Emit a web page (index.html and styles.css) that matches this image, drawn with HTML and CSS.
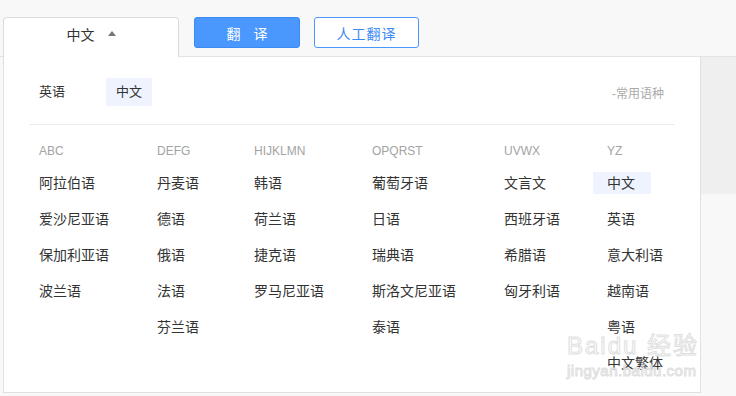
FILE: index.html
```html
<!DOCTYPE html>
<html lang="zh-CN">
<head>
  <meta charset="UTF-8" />
  <meta name="viewport" content="width=device-width, initial-scale=1.0" />
  <title>翻译 - 语种选择</title>
  <link rel="stylesheet" href="styles.css">
</head>
<body>
  <!-- Top bar: language tab and the two action buttons -->
  <div class="top-bar">
    <div class="lang-tab">
      <span>中文</span>
      <i class="caret"></i>
    </div>
    <button class="btn btn-primary">翻译</button>
    <button class="btn btn-outline">人工翻译</button>
  </div>

  <div class="main">
    <div class="lang-panel">
      <div class="common-row">
        <span class="lang-item">英语</span>
        <span class="lang-item active">中文</span>
        <span class="common-label">-常用语种</span>
      </div>

      <div class="lang-columns">
        <div class="lang-col">
          <div class="col-title">ABC</div>
          <div class="lang-item">阿拉伯语</div>
          <div class="lang-item">爱沙尼亚语</div>
          <div class="lang-item">保加利亚语</div>
          <div class="lang-item">波兰语</div>
        </div>
        <div class="lang-col">
          <div class="col-title">DEFG</div>
          <div class="lang-item">丹麦语</div>
          <div class="lang-item">德语</div>
          <div class="lang-item">俄语</div>
          <div class="lang-item">法语</div>
          <div class="lang-item">芬兰语</div>
        </div>
        <div class="lang-col">
          <div class="col-title">HIJKLMN</div>
          <div class="lang-item">韩语</div>
          <div class="lang-item">荷兰语</div>
          <div class="lang-item">捷克语</div>
          <div class="lang-item">罗马尼亚语</div>
        </div>
        <div class="lang-col">
          <div class="col-title">OPQRST</div>
          <div class="lang-item">葡萄牙语</div>
          <div class="lang-item">日语</div>
          <div class="lang-item">瑞典语</div>
          <div class="lang-item">斯洛文尼亚语</div>
          <div class="lang-item">泰语</div>
        </div>
        <div class="lang-col">
          <div class="col-title">UVWX</div>
          <div class="lang-item">文言文</div>
          <div class="lang-item">西班牙语</div>
          <div class="lang-item">希腊语</div>
          <div class="lang-item">匈牙利语</div>
        </div>
        <div class="lang-col">
          <div class="col-title">YZ</div>
          <div class="lang-item active">中文</div>
          <div class="lang-item">英语</div>
          <div class="lang-item">意大利语</div>
          <div class="lang-item">越南语</div>
          <div class="lang-item">粤语</div>
          <div class="lang-item">中文繁体</div>
        </div>
      </div>

      <!-- watermark over the panel -->
      <div class="watermark">
        <div class="wm-big">Baidu 经验</div>
        <div class="wm-small">jingyan.baidu.com</div>
      </div>
    </div>
    <div class="side">
      <div class="side-block"></div>
    </div>
  </div>
</body>
</html>
```

FILE: styles.css
```css
body {
  margin: 0;
  padding: 0;
  background: #f8f8f8;
  font-family: "Liberation Sans", "Noto Sans CJK SC", sans-serif;
  color: #333;
}
.top-bar {
  display: flex;
  align-items: flex-start;
  height: 57px;
  padding: 17px 0 0 3px;
  box-sizing: border-box;
  border-bottom: 1px solid #e3e3e3;
}
.lang-tab {
  width: 176px;
  height: 41px;
  margin-bottom: -1px;
  box-sizing: border-box;
  background: white;
  border: 1px solid #dcdcdc;
  border-bottom: none;
  border-radius: 4px 4px 0 0;
  display: flex;
  justify-content: center;
  align-items: center;
  gap: 13px;
  padding-bottom: 9px;
  font-size: 14px;
  color: #333;
}
.caret {
  display: block;
  width: 0;
  height: 0;
  border-left: 4px solid transparent;
  border-right: 4px solid transparent;
  border-bottom: 5px solid #777;
  margin-top: -1px;
}
.btn {
  height: 31px;
  width: 106px;
  margin-left: 15px;
  border-radius: 3px;
  font-family: "Noto Sans CJK SC", sans-serif;
  font-size: 14px;
  cursor: pointer;
  padding: 0;
}
.btn-primary {
  background: #4a97fd;
  border: 1px solid #3c8bf5;
  color: white;
  letter-spacing: 13px;
  padding-left: 13px;
}
.btn-outline {
  margin-left: 14px;
  width: 105px;
  background: white;
  border: 1px solid #4a97fd;
  color: #3d8af7;
  letter-spacing: 1px;
}
.main {
  display: flex;
}
.lang-panel {
  position: relative;
  margin-left: 3px;
  width: 698px;
  box-sizing: border-box;
  background: white;
  border: 1px solid #e0e0e0;
  border-top: none;
  padding: 21px 25px 18px;
}
.common-row {
  display: flex;
  align-items: center;
  gap: 31px;
  padding-bottom: 18px;
  border-bottom: 1px solid #ececec;
}
.common-row .lang-item {
  font-size: 13px;
  line-height: 28px;
  padding: 0 10px;
  margin-top: 0;
}
.common-label {
  margin-left: auto;
  margin-right: 11px;
  font-size: 12px;
  color: #aaa;
}
.lang-columns {
  display: grid;
  grid-template-columns: 118px 97px 118px 132px 103px auto;
  padding: 18px 0 0 10px;
}
.col-title {
  font-size: 12px;
  line-height: 16px;
  color: #a3a3a3;
}
.lang-item {
  font-size: 14px;
  line-height: 22px;
  margin-top: 14px;
  color: #333;
  white-space: nowrap;
}
.col-title + .lang-item {
  margin-top: 13px;
}
.lang-item.active {
  background: #eef3fd;
}
.lang-col .lang-item.active {
  width: fit-content;
  margin-left: -14px;
  padding: 0 16px 0 14px;
}
.watermark {
  position: absolute;
  left: 563px;
  top: 276px;
  white-space: nowrap;
  color: rgba(255, 255, 255, 0.3);
  -webkit-text-stroke: 1px #e0e0e0;
  pointer-events: none;
}
.wm-big {
  font-size: 24px;
  line-height: 26px;
  letter-spacing: 2px;
}
.wm-small {
  font-size: 15px;
  line-height: 18px;
  margin-top: 3px;
  letter-spacing: 0.5px;
}
.side {
  flex: 1;
}
.side-block {
  height: 137px;
  background: #efefef;
}
```
